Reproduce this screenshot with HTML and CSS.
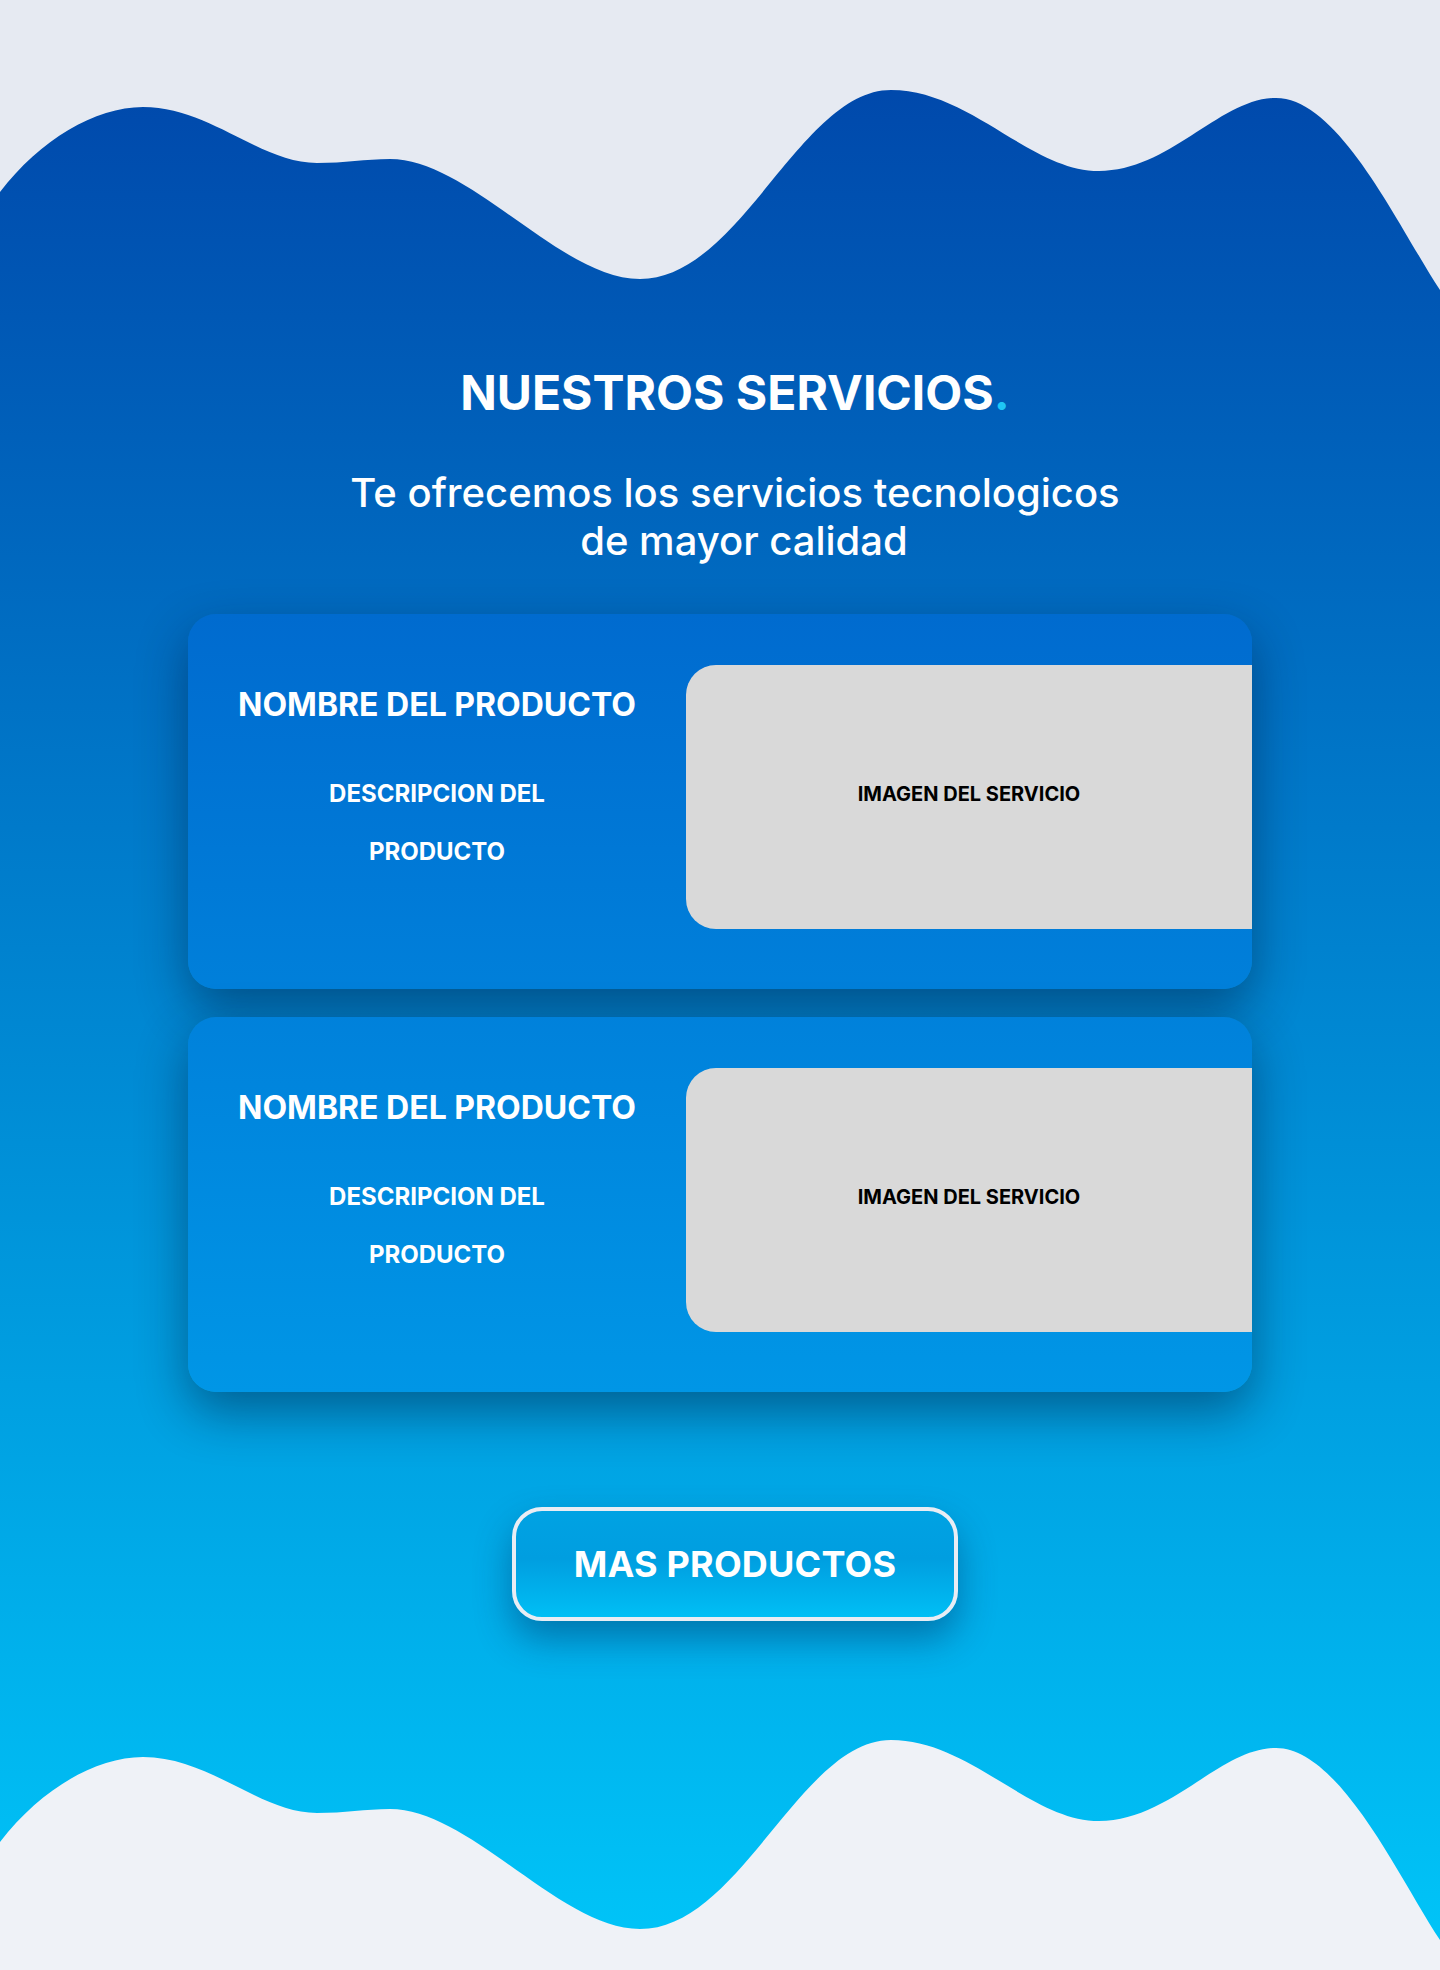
FILE: index.html
```html
<!DOCTYPE html>
<html lang="es">
<head>
<meta charset="utf-8">
<title>Nuestros servicios</title>
<link rel="stylesheet" href="styles.css">
</head>
<body>
<div class="page">
  <svg class="wave wave-top" viewBox="0 0 1440 290" preserveAspectRatio="none" aria-hidden="true">
    <path fill="#e6eaf2" d="M0,192 C40,140 95,107 143,107 C210,107 260,163 317,163 C345,163 365,159 390,159 C470,159 560,279 640,279 C740,279 800,90 891,90 C970,90 1030,171 1099,171 C1170,171 1220,98 1276,98 C1340,98 1400,230 1440,290 L1440,0 L0,0 Z"/>
  </svg>

  <section class="services">
    <header class="intro">
      <h1 class="intro-title">NUESTROS SERVICIOS<span class="dot">.</span></h1>
      <p class="intro-lead">Te ofrecemos los servicios tecnologicos <span class="lead-second">de mayor calidad</span></p>
    </header>

    <div class="cards">
      <article class="card">
        <div class="card-info">
          <h2 class="card-title">NOMBRE DEL PRODUCTO</h2>
          <p class="card-desc">DESCRIPCION DEL PRODUCTO</p>
        </div>
        <div class="card-image">IMAGEN DEL SERVICIO</div>
      </article>
      <article class="card">
        <div class="card-info">
          <h2 class="card-title">NOMBRE DEL PRODUCTO</h2>
          <p class="card-desc">DESCRIPCION DEL PRODUCTO</p>
        </div>
        <div class="card-image">IMAGEN DEL SERVICIO</div>
      </article>
    </div>

    <div class="more">
      <button class="more-btn" type="button">MAS PRODUCTOS</button>
    </div>
  </section>

  <svg class="wave wave-bottom" viewBox="0 90 1440 230" preserveAspectRatio="none" aria-hidden="true">
    <path fill="#eff2f7" d="M0,192 C40,140 95,107 143,107 C210,107 260,163 317,163 C345,163 365,159 390,159 C470,159 560,279 640,279 C740,279 800,90 891,90 C970,90 1030,171 1099,171 C1170,171 1220,98 1276,98 C1340,98 1400,230 1440,290 L1440,320 L0,320 Z"/>
  </svg>
</div>
</body>
</html>
```

FILE: styles.css
```css
* {
  box-sizing: border-box;
}

html, body {
  margin: 0;
  padding: 0;
}

body {
  background: #eff2f7;
  font-family: Inter, "Noto Sans", "Liberation Sans", sans-serif;
  color: #ffffff;
}

.page {
  width: 1440px;
  background: linear-gradient(180deg, #0043a8 0%, #00c6f9 100%);
}

.wave {
  display: block;
  width: 1440px;
}

.wave-top {
  height: 290px;
}

.wave-bottom {
  height: 230px;
}

.services {
  padding: 74px 0 119px;
}

.intro {
  padding-left: 30px;
  text-align: center;
}

.intro-title {
  margin: 0;
  font-size: 48px;
  line-height: 58px;
  font-weight: 700;
}

.dot {
  color: #1ec6f6;
}

.intro-lead {
  max-width: 800px;
  margin: 47px auto 0;
  font-size: 40px;
  line-height: 48px;
  font-weight: 500;
}

.lead-second {
  display: inline-block;
  padding-left: 18px;
}

.cards {
  width: 1064px;
  margin: 49px auto 0;
  display: flex;
  flex-direction: column;
  gap: 28px;
}

.card {
  display: grid;
  grid-template-columns: 498px 1fr;
  padding: 51px 0 60px;
  border-radius: 28px;
  background: linear-gradient(180deg, #0049bd 0%, #00b6f7 100%) fixed;
  box-shadow: 0 20px 50px rgba(0, 20, 50, 0.45);
}

.card-info {
  padding-top: 22px;
  text-align: center;
}

.card-title {
  margin: 0;
  font-size: 32px;
  line-height: 36px;
  font-weight: 700;
}

.card-desc {
  max-width: 260px;
  margin: 42px auto 0;
  font-size: 24px;
  line-height: 58px;
  font-weight: 700;
}

.card-image {
  height: 264px;
  display: flex;
  align-items: center;
  justify-content: center;
  padding-bottom: 6px;
  background: #d9d9d9;
  border-radius: 30px 0 0 30px;
  color: #000000;
  font-size: 20px;
  font-weight: 700;
}

.more {
  margin-top: 115px;
  padding-left: 30px;
  display: flex;
  justify-content: center;
}

.more-btn {
  width: 446px;
  height: 114px;
  border: 4px solid #e9edf4;
  border-radius: 30px;
  background: linear-gradient(180deg, #00a2e3 0%, #009ee0 45%, #00bff5 100%);
  box-shadow: 0 18px 36px rgba(0, 40, 90, 0.42);
  color: #ffffff;
  font-family: Inter, "Noto Sans", "Liberation Sans", sans-serif;
  font-size: 36px;
  font-weight: 700;
  letter-spacing: 0.2px;
  cursor: pointer;
}
```
